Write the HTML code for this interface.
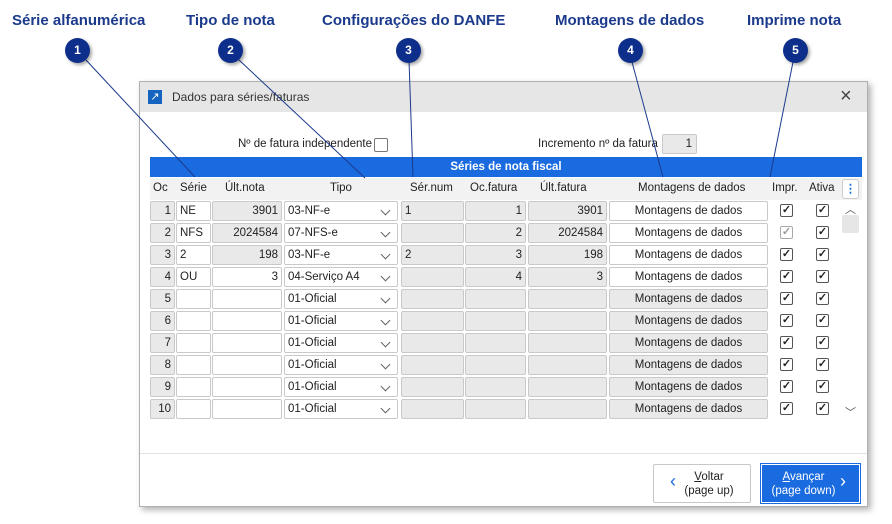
<!DOCTYPE html>
<html><head><meta charset="utf-8"><style>
*{box-sizing:border-box;margin:0;padding:0}
body{width:892px;height:524px;background:#fff;position:relative;overflow:hidden;font-family:"Segoe UI","Liberation Sans",sans-serif;font-size:11.5px;color:#222}
.t{position:absolute;top:12px;font:bold 15px "Liberation Sans",sans-serif;color:#1b3a8c;white-space:nowrap}
.c{position:absolute;width:25px;height:25px;border-radius:50%;background:#0d2e8a;color:#fff;font:bold 12px "Liberation Sans",sans-serif;text-align:center;line-height:25px;box-shadow:2px 2px 3px rgba(0,0,0,.35);z-index:5}
svg.l{position:absolute;left:0;top:0;z-index:4}
.dlg{position:absolute;left:139px;top:81px;width:729px;height:426px;background:#fff;border:1px solid #b0b0b0;box-shadow:3px 3px 6px rgba(0,0,0,.3)}
.tb{position:absolute;left:0;top:0;width:100%;height:30px;background:#e6e6e6;font-size:12px;color:#333;line-height:30px;padding-left:32px}
.a{position:absolute}
.r{position:absolute;left:10px;height:20px;width:712px}
.r>div{position:absolute;top:0;height:20px;border:1px solid #c9c9c9;border-radius:2px;line-height:18px;padding:0 3px;white-space:nowrap;overflow:hidden}
.g{background:#e9e9e9}.w{background:#fff}
.oc{left:0;width:25px;text-align:right;background:#e9e9e9}
.se{left:26px;width:35px}
.un{left:62px;width:70px;text-align:right}
.ti{left:134px;width:114px;background:#fff}
.ti:after{content:"";position:absolute;right:8px;top:5px;width:6px;height:6px;border-right:1px solid #666;border-bottom:1px solid #666;transform:rotate(45deg)}
.sn{left:251px;width:63px;background:#e9e9e9}
.of{left:315px;width:61px;text-align:right;background:#e9e9e9}
.uf{left:378px;width:79px;text-align:right;background:#e9e9e9}
.mo{left:459px;width:159px;text-align:center}
.r>.ck{width:13px;height:13px;top:3px;border:1px solid #555;border-radius:2px;background:#fff;padding:0;font-size:11px;line-height:11px;text-align:center;font-weight:bold}
.i1{left:630px}.i2{left:666px}
.h{position:absolute;top:96px;left:10px;width:712px;height:22px;background:#f2f2f2}
.h span{position:absolute;top:4px}
</style></head><body>
<div class="t" style="left:12px">Série alfanumérica</div>
<div class="t" style="left:186px">Tipo de nota</div>
<div class="t" style="left:322px">Configurações do DANFE</div>
<div class="t" style="left:555px">Montagens de dados</div>
<div class="t" style="left:747px">Imprime nota</div>
<div class="c" style="left:65px;top:38px">1</div>
<div class="c" style="left:218px;top:38px">2</div>
<div class="c" style="left:396px;top:38px">3</div>
<div class="c" style="left:618px;top:38px">4</div>
<div class="c" style="left:783px;top:38px">5</div>
<svg class="l" width="892" height="524"><g stroke="#1b3a8c" stroke-width="1"><line x1="86" y1="60" x2="195" y2="177"/><line x1="239" y1="60" x2="365" y2="178"/><line x1="409" y1="60" x2="413" y2="177"/><line x1="632" y1="62" x2="663" y2="177"/><line x1="793" y1="62" x2="770" y2="177"/></g></svg>
<div class="dlg">
<div class="tb">Dados para séries/faturas</div>
<div class="a" style="left:8px;top:8px;width:14px;height:14px;background:#1565c0;color:#fff;font-size:11px;line-height:14px;text-align:center">↗</div>
<div class="a" style="left:700px;top:3px;font-size:20px;color:#444">×</div>
<div class="a" style="left:98px;top:56px">Nº de fatura independente</div>
<div class="a" style="left:234px;top:56px;width:14px;height:14px;border:1px solid #777;border-radius:2px"></div>
<div class="a" style="left:398px;top:56px">Incremento nº da fatura</div>
<div class="a" style="left:522px;top:52px;width:35px;height:20px;background:#e9e9e9;border:1px solid #c9c9c9;border-radius:2px;text-align:right;padding-right:4px;line-height:18px">1</div>
<div class="a" style="left:10px;top:75px;width:712px;height:20px;background:#1a6be0;color:#fff;font-weight:bold;text-align:center;line-height:20px">Séries de nota fiscal</div>
<div class="h"><span style="left:3px">Oc</span><span style="left:30px">Série</span><span style="left:75px">Últ.nota</span><span style="left:180px">Tipo</span><span style="left:260px">Sér.num</span><span style="left:320px">Oc.fatura</span><span style="left:390px">Últ.fatura</span><span style="left:488px">Montagens de dados</span><span style="left:622px">Impr.</span><span style="left:659px">Ativa</span></div>
<div class="a" style="left:702px;top:97px;width:17px;height:20px;border:1px solid #ccc;border-radius:3px;background:#fff;color:#1a6be0;text-align:center;font-weight:bold;line-height:18px">⋮</div>
<div class="a" style="left:705px;top:119px;color:#555;font-size:11px">︿</div>
<div class="a" style="left:702px;top:133px;width:17px;height:18px;background:#e6e6e6;border-radius:2px"></div>
<div class="a" style="left:705px;top:322px;color:#555;font-size:11px">﹀</div>

<div class="r" style="top:119px"><div class="oc">1</div><div class="se w">NE</div><div class="un g">3901</div><div class="ti">03-NF-e</div><div class="sn">1</div><div class="of">1</div><div class="uf">3901</div><div class="mo w">Montagens de dados</div><div class="ck i1">✓</div><div class="ck i2">✓</div></div>
<div class="r" style="top:141px"><div class="oc">2</div><div class="se w">NFS</div><div class="un g">2024584</div><div class="ti">07-NFS-e</div><div class="sn"></div><div class="of">2</div><div class="uf">2024584</div><div class="mo w">Montagens de dados</div><div class="ck i1" style="color:#999;border-color:#aaa">✓</div><div class="ck i2">✓</div></div>
<div class="r" style="top:163px"><div class="oc">3</div><div class="se w">2</div><div class="un g">198</div><div class="ti">03-NF-e</div><div class="sn">2</div><div class="of">3</div><div class="uf">198</div><div class="mo w">Montagens de dados</div><div class="ck i1">✓</div><div class="ck i2">✓</div></div>
<div class="r" style="top:185px"><div class="oc">4</div><div class="se w">OU</div><div class="un w">3</div><div class="ti">04-Serviço A4</div><div class="sn"></div><div class="of">4</div><div class="uf">3</div><div class="mo w">Montagens de dados</div><div class="ck i1">✓</div><div class="ck i2">✓</div></div>
<div class="r" style="top:207px"><div class="oc">5</div><div class="se w"></div><div class="un w"></div><div class="ti">01-Oficial</div><div class="sn"></div><div class="of"></div><div class="uf"></div><div class="mo g">Montagens de dados</div><div class="ck i1">✓</div><div class="ck i2">✓</div></div>
<div class="r" style="top:229px"><div class="oc">6</div><div class="se w"></div><div class="un w"></div><div class="ti">01-Oficial</div><div class="sn"></div><div class="of"></div><div class="uf"></div><div class="mo g">Montagens de dados</div><div class="ck i1">✓</div><div class="ck i2">✓</div></div>
<div class="r" style="top:251px"><div class="oc">7</div><div class="se w"></div><div class="un w"></div><div class="ti">01-Oficial</div><div class="sn"></div><div class="of"></div><div class="uf"></div><div class="mo g">Montagens de dados</div><div class="ck i1">✓</div><div class="ck i2">✓</div></div>
<div class="r" style="top:273px"><div class="oc">8</div><div class="se w"></div><div class="un w"></div><div class="ti">01-Oficial</div><div class="sn"></div><div class="of"></div><div class="uf"></div><div class="mo g">Montagens de dados</div><div class="ck i1">✓</div><div class="ck i2">✓</div></div>
<div class="r" style="top:295px"><div class="oc">9</div><div class="se w"></div><div class="un w"></div><div class="ti">01-Oficial</div><div class="sn"></div><div class="of"></div><div class="uf"></div><div class="mo g">Montagens de dados</div><div class="ck i1">✓</div><div class="ck i2">✓</div></div>
<div class="r" style="top:317px"><div class="oc">10</div><div class="se w"></div><div class="un w"></div><div class="ti">01-Oficial</div><div class="sn"></div><div class="of"></div><div class="uf"></div><div class="mo g">Montagens de dados</div><div class="ck i1">✓</div><div class="ck i2">✓</div></div>

<div class="a" style="left:0;top:371px;width:727px;height:1px;background:#e3e3e3"></div>
<div class="a" style="left:513px;top:382px;width:98px;height:39px;border:1px solid #c8c8c8;border-radius:2px;background:#fff;text-align:center;line-height:14px;padding-top:5px;padding-left:14px"><u>V</u>oltar<br>(page up)</div>
<div class="a" style="left:530px;top:389px;color:#1a6be0;font-size:18px">‹</div>
<div class="a" style="left:620px;top:381px;width:101px;height:41px;border:1px solid #1a6be0;padding:1px"><div style="width:100%;height:100%;background:#1a6be0;color:#fff;text-align:center;line-height:14px;padding-top:5px;padding-right:14px"><u>A</u>vançar<br>(page down)</div></div>
<div class="a" style="left:700px;top:389px;color:#fff;font-size:18px">›</div>
</div>
</body></html>
